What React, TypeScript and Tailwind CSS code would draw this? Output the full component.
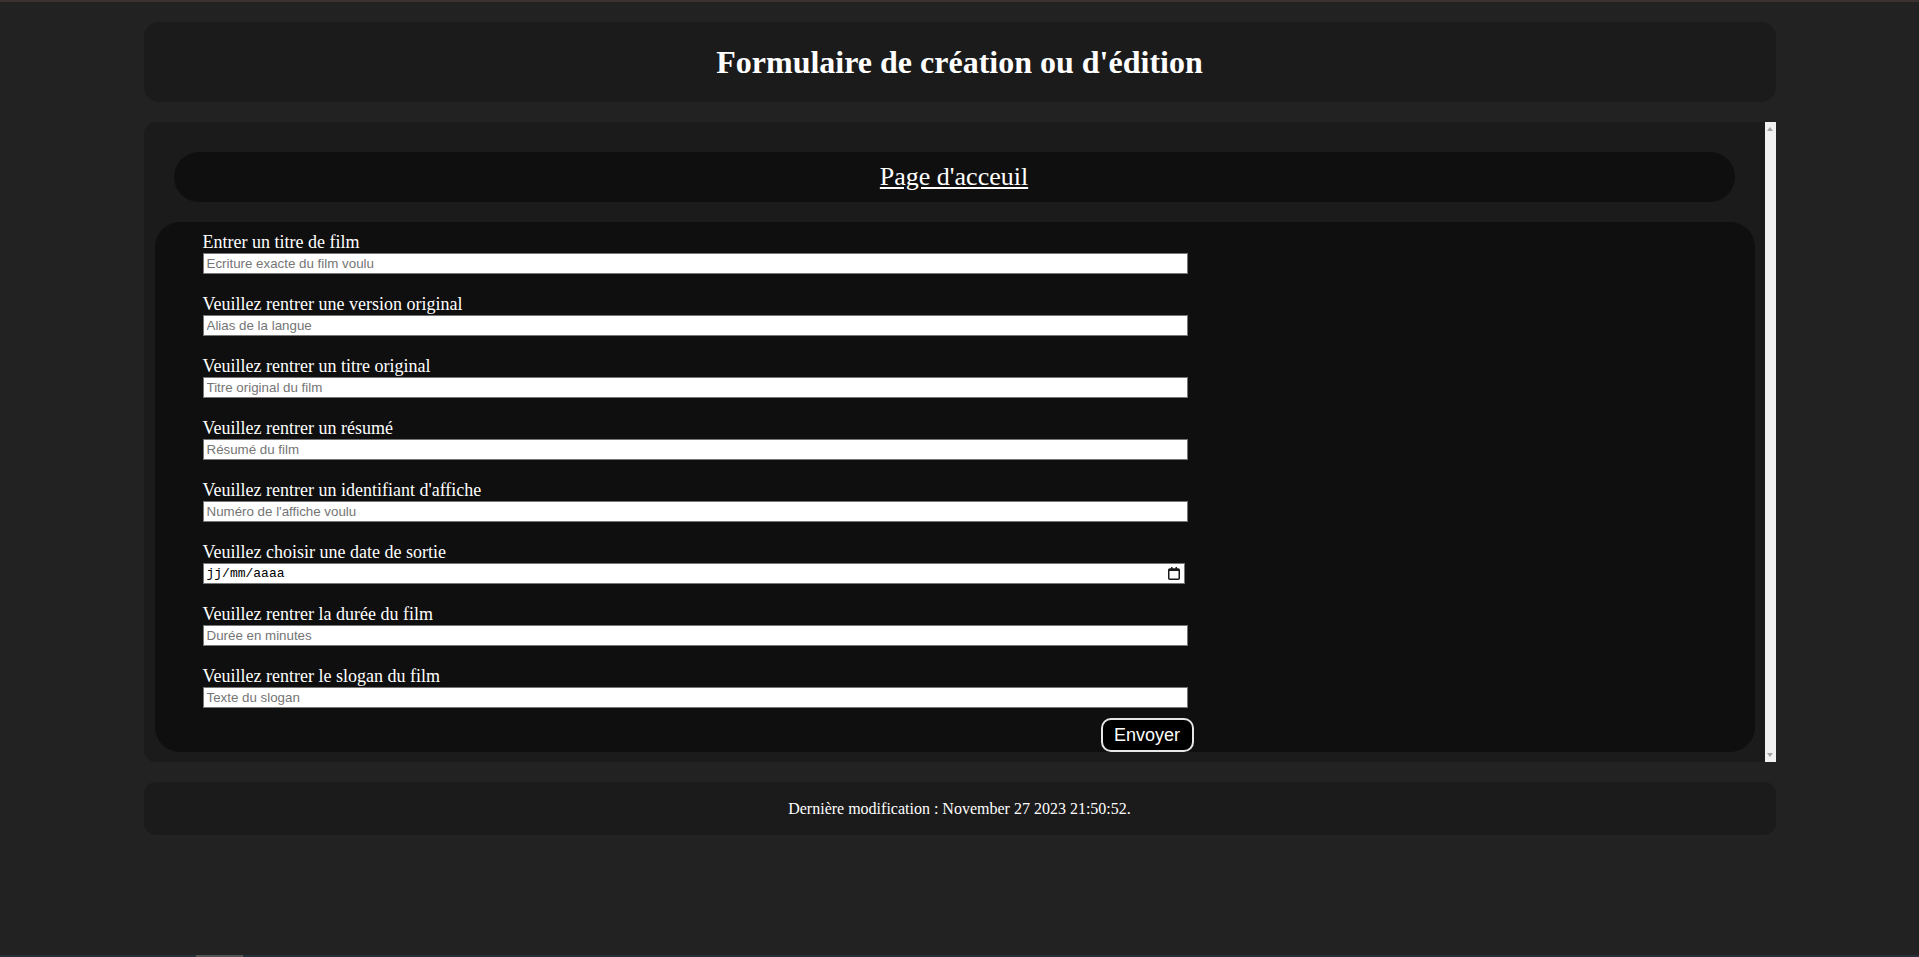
import React from 'react';

interface Field {
  label: string;
  placeholder: string;
}

const fields: Field[] = [
  { label: 'Entrer un titre de film', placeholder: 'Ecriture exacte du film voulu' },
  { label: 'Veuillez rentrer une version original', placeholder: 'Alias de la langue' },
  { label: 'Veuillez rentrer un titre original', placeholder: 'Titre original du film' },
  { label: 'Veuillez rentrer un résumé', placeholder: 'Résumé du film' },
  { label: "Veuillez rentrer un identifiant d'affiche", placeholder: "Numéro de l'affiche voulu" },
  { label: 'Veuillez choisir une date de sortie', placeholder: '' },
  { label: 'Veuillez rentrer la durée du film', placeholder: 'Durée en minutes' },
  { label: 'Veuillez rentrer le slogan du film', placeholder: 'Texte du slogan' },
];

const serif = "font-['Liberation_Serif','Times_New_Roman',serif]";

const CalendarIcon: React.FC = () => (
  <svg width="12" height="13" viewBox="0 0 12 13" className="shrink-0">
    <rect x="3" y="0" width="1.5" height="2.5" fill="#1a1a1a" />
    <rect x="7.5" y="0" width="1.5" height="2.5" fill="#1a1a1a" />
    <rect x="0.75" y="2" width="10.5" height="10.25" rx="1" fill="none" stroke="#1a1a1a" strokeWidth="1.5" />
    <rect x="1" y="2" width="10" height="2" fill="#1a1a1a" />
  </svg>
);

const FormRow: React.FC<{ field: Field; isDate: boolean }> = ({ field, isDate }) => (
  <div className="flex flex-col">
    <label className={`${serif} text-[18px] leading-[21px] text-white`}>{field.label}</label>
    {isDate ? (
      <div className="flex h-[21px] w-[982px] items-center justify-between border border-[#767676] bg-white pl-[3px] pr-[4px]">
        <span className="font-['Liberation_Mono','Courier_New',monospace] text-[13px] leading-none text-black">
          jj/mm/aaaa
        </span>
        <CalendarIcon />
      </div>
    ) : (
      <input
        type="text"
        placeholder={field.placeholder}
        className="h-[21px] w-[985px] border border-[#767676] bg-white px-[3px] font-['Liberation_Sans',Arial,sans-serif] text-[13.33px] text-black outline-none placeholder:text-[#757575]"
      />
    )}
  </div>
);

const App: React.FC = () => {
  return (
    <div className="flex min-h-[957px] flex-col bg-[#222222]">
      <div className="h-[2px] bg-[#3b3130]" />

      <div className="mx-auto mt-[20px] flex w-[1632px] flex-col gap-[20px]">
        <header className="flex h-[80px] items-center justify-center rounded-[15px] bg-[#1b1b1b]">
          <h1 className={`${serif} text-[32px] font-bold leading-none text-white`}>
            Formulaire de création ou d'édition
          </h1>
        </header>

        <main className="flex h-[640px] rounded-l-[12px] bg-[#1b1b1b]">
          <div className="flex flex-1 flex-col">
            <nav className="mx-[30px] mt-[30px] flex h-[50px] items-center justify-center rounded-full bg-[#0f0f0f]">
              <a href="#" className={`${serif} text-[26px] leading-none text-white underline`}>
                Page d'acceuil
              </a>
            </nav>

            <form
              className="mb-[10px] ml-[11px] mr-[10px] mt-[20px] flex h-[530px] flex-col rounded-[25px] bg-[#0f0f0f] pl-[48px] pt-[10px]"
              onSubmit={(e) => e.preventDefault()}
            >
              <div className="flex w-[991px] flex-col">
                <div className="flex flex-col gap-[20px]">
                  {fields.map((f, i) => (
                    <FormRow key={f.label} field={f} isDate={i === 5} />
                  ))}
                </div>
                <button
                  type="submit"
                  className="mt-[10px] flex h-[34px] w-[93px] items-center justify-center self-end rounded-[10px] border-2 border-[#e6e6e6] bg-black font-['Liberation_Sans',Arial,sans-serif] text-[18px] text-white"
                >
                  Envoyer
                </button>
              </div>
            </form>
          </div>

          {/* scrollbar strip */}
          <div className="flex w-[11px] flex-col items-center justify-between bg-[#f1f1f1] py-[5px]">
            <svg width="6" height="4" viewBox="0 0 6 4">
              <path d="M3 0 L6 4 L0 4 Z" fill="#a3a3a3" />
            </svg>
            <svg width="6" height="4" viewBox="0 0 6 4">
              <path d="M0 0 L6 0 L3 4 Z" fill="#a3a3a3" />
            </svg>
          </div>
        </main>

        <footer className="flex h-[53px] items-center justify-center rounded-[12px] bg-[#1b1b1b]">
          <p className={`${serif} text-[16px] text-white`}>
            Dernière modification : November 27 2023 21:50:52.
          </p>
        </footer>
      </div>

      <div className="flex-1" />
      <div className="flex h-[2px] bg-[#26303a]">
        <div className="ml-[196px] w-[47px] bg-[#555555]" />
      </div>
    </div>
  );
};

export default App;
